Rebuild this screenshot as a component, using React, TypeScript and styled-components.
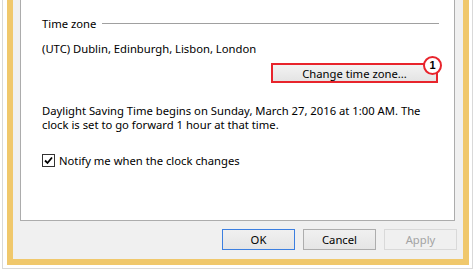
import React from "react";
import styled, { createGlobalStyle } from "styled-components";

const Global = createGlobalStyle`
  html, body { margin: 0; padding: 0; background: #ffffff; }
  body { width: 474px; height: 271px; overflow: hidden; }
`;

const Page = styled.div`
  width: 474px;
  height: 271px;
  box-sizing: border-box;
  padding: 0 1px 2px 2px;
  background: #ffffff;
  display: flex;
  font-family: "Segoe UI", "Noto Sans", sans-serif;
  font-size: 11.25px;
  color: #000000;
`;

const Frame = styled.div`
  flex: 1;
  display: flex;
  border: 1px solid #d9d9d9;
  border-top: none;
  padding: 0 3px 3px 4px;
  background: #ffffff;
`;

const Accent = styled.div`
  flex: 1;
  display: flex;
  border: 6px solid #f0c86c;
  border-top: none;
`;

const Dialog = styled.div`
  flex: 1;
  display: flex;
  flex-direction: column;
  background: #f0f0f0;
  padding: 0 8px 0 7px;
`;

const Panel = styled.div`
  height: 221px;
  box-sizing: border-box;
  background: #ffffff;
  border: 1px solid #acacac;
  border-top: none;
  padding: 16px 15px 0 21px;
  display: flex;
  flex-direction: column;
`;

const GroupHeader = styled.div`
  display: flex;
  align-items: center;
  gap: 6px;
  height: 15px;
  line-height: 15px;
`;

const GroupLine = styled.div`
  flex: 1;
  height: 1px;
  background: #a0a0a0;
`;

const Line = styled.div<{ $top: number }>`
  margin-top: ${(p) => p.$top}px;
  line-height: 15px;
`;

const Paragraph = styled.div`
  margin-top: 21px;
  line-height: 14px;
`;

const ActionRow = styled.div`
  margin-top: 7px;
  display: flex;
  justify-content: flex-end;
`;

const Highlight = styled.div`
  position: relative;
  width: 167px;
  height: 20px;
  box-sizing: border-box;
  border: 2px solid #e8242c;
  background: linear-gradient(#f3f3f3, #e4e4e4);
  display: flex;
  align-items: center;
  justify-content: center;
  margin-right: 1px;
`;

const Badge = styled.div`
  position: absolute;
  right: -6px;
  top: -9px;
  width: 15px;
  height: 15px;
  border-radius: 50%;
  border: 2px solid #e8242c;
  background: #ffffff;
  font-family: "Liberation Sans", Arial, sans-serif;
  font-weight: bold;
  font-size: 11px;
  line-height: 15px;
  text-align: center;
`;

const CheckRow = styled.label`
  margin-top: 21px;
  display: flex;
  align-items: center;
  gap: 4px;
  line-height: 15px;
`;

const Box = styled.span`
  width: 11px;
  height: 11px;
  border: 1px solid #333333;
  background: #ffffff;
  display: flex;
  align-items: center;
  justify-content: center;
`;

const Buttons = styled.div`
  margin-top: 8px;
  display: flex;
  justify-content: flex-end;
  gap: 8px;
  margin-right: -2px;
`;

const Button = styled.div<{ $variant?: "default" | "disabled" }>`
  width: 73px;
  height: 21px;
  box-sizing: border-box;
  display: flex;
  align-items: center;
  justify-content: center;
  border: 1px solid
    ${(p) =>
      p.$variant === "default"
        ? "#3c7fe0"
        : p.$variant === "disabled"
        ? "#d9d9d9"
        : "#adadad"};
  background: ${(p) =>
    p.$variant === "disabled" ? "#f0f0f0" : "linear-gradient(#f0f0f0, #e5e5e5)"};
  color: ${(p) => (p.$variant === "disabled" ? "#a3a3a3" : "#000000")};
`;

export default function App() {
  return (
    <>
      <Global />
      <Page>
        <Frame>
          <Accent>
            <Dialog>
              <Panel>
                <GroupHeader>
                  <span>Time zone</span>
                  <GroupLine />
                </GroupHeader>
                <Line $top={10}>(UTC) Dublin, Edinburgh, Lisbon, London</Line>
                <ActionRow>
                  <Highlight>
                    Change time zone...
                    <Badge>1</Badge>
                  </Highlight>
                </ActionRow>
                <Paragraph>
                  Daylight Saving Time begins on Sunday, March 27, 2016 at 1:00 AM. The
                  <br />
                  clock is set to go forward 1 hour at that time.
                </Paragraph>
                <CheckRow>
                  <Box>
                    <svg width="9" height="9" viewBox="0 0 9 9">
                      <path d="M1 4.5 L3.5 7 L8 1.5" fill="none" stroke="#000" strokeWidth="1.8" />
                    </svg>
                  </Box>
                  Notify me when the clock changes
                </CheckRow>
              </Panel>
              <Buttons>
                <Button $variant="default">OK</Button>
                <Button>Cancel</Button>
                <Button $variant="disabled">Apply</Button>
              </Buttons>
            </Dialog>
          </Accent>
        </Frame>
      </Page>
    </>
  );
}
